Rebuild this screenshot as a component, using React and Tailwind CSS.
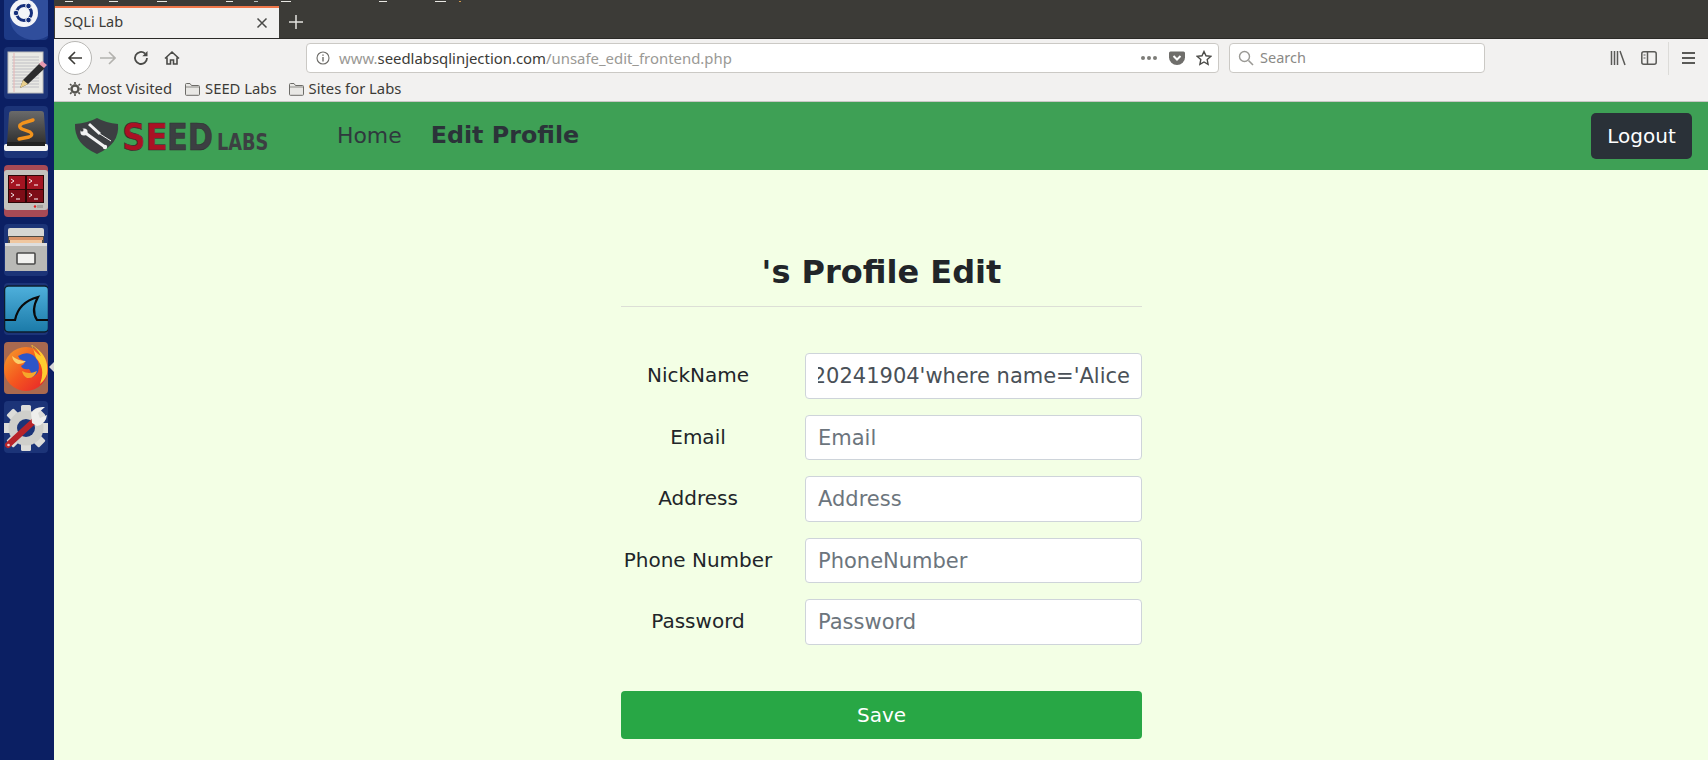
import React from "react";
const ui = { fontFamily: '"Noto Sans", "Open Sans", sans-serif' };
const dv = { fontFamily: '"DejaVu Sans", sans-serif' };

function Tile({ bg = "bg-[#1c3478]", children }) {
  return <div className={`w-[44px] h-[52px] rounded-[4px] ${bg} flex items-center justify-center overflow-hidden shrink-0`}>{children}</div>;
}
const Ubuntu = () => (
  <svg width="44" height="52" viewBox="0 0 44 52">
    <ellipse cx="30" cy="30" rx="24" ry="22" fill="#3d5cab" opacity=".6" />
    <circle cx="20" cy="25" r="14" fill="#f4f5f8" />
    <circle cx="20" cy="25" r="7.5" fill="none" stroke="#17307c" strokeWidth="3" />
    <circle cx="12" cy="25" r="2.8" fill="#17307c" stroke="#f4f5f8" /><circle cx="24.500" cy="18" r="2.800" fill="#17307c" stroke="#f4f5f8" /><circle cx="24.500" cy="32" r="2.800" fill="#17307c" stroke="#f4f5f8" />
  </svg>
);
const Notes = () => (
  <svg width="44" height="52" viewBox="0 0 44 52">
    <rect x="4" y="5" width="35" height="41" fill="#e9e9e4" stroke="#bbb" />
    {[10,13,16,19,22,25,28,31,34,37,40].map(y => <line key={y} x1="8" x2="35" y1={y} y2={y} stroke="#b4b4bb" strokeWidth=".8" />)}
    <line x1="10" x2="10" y1="6" y2="45" stroke="#e7b4b4" />
    <path d="M16 41 L19 33 L36 16 L41 21 L24 37 Z" fill="#2d2d2d" />
    <path d="M35 17 L38 14 L43 18 L40 21 Z" fill="#e79ab0" />
    <path d="M16 41 L19 33 L24 37 Z" fill="#e8cf8d" />
  </svg>
);
const Sublime = () => (
  <svg width="44" height="52" viewBox="0 0 44 52">
    <defs><linearGradient id="sb" x1="0" y1="0" x2="0" y2="1"><stop offset="0" stopColor="#6a6a6a" /><stop offset="1" stopColor="#2f2f2f" /></linearGradient></defs>
    <path d="M5 8 Q5 5 8 5 L37 5 Q40 5 40 8 L42 38 L3 38 Z" fill="url(#sb)" />
    <rect x="0" y="38" width="44" height="7" rx="2" fill="#f2f2f2" />
    <rect x="3" y="36" width="38" height="4" fill="#222" />
    <path d="M29 14 L19 17 Q13 20 18 23 L26 26 Q30 29 25 31 L15 33" fill="none" stroke="#f2931c" strokeWidth="3.4" strokeLinecap="round" />
  </svg>
);
const Term = () => (
  <svg width="44" height="52" viewBox="0 0 44 52">
    <rect x="0" y="5" width="44" height="40" rx="3" fill="#c4c2bd" />
    <rect x="4" y="10" width="36" height="28" fill="#2c0707" />
    <rect x="5" y="11" width="16" height="13" fill="#a31421" /><rect x="23" y="11" width="16" height="13" fill="#a31421" />
    <rect x="5" y="25" width="16" height="12" fill="#7d0d17" /><rect x="23" y="25" width="16" height="12" fill="#7d0d17" />
    <path d="M7 14l3 2-3 2M25 14l3 2-3 2M7 28l3 2-3 2M25 28l3 2-3 2" stroke="#fff" strokeWidth=".9" fill="none" />
    <path d="M12 20h4M30 20h4M12 34h4M30 34h4" stroke="#fff" strokeWidth="1" />
    <circle cx="31" cy="41.500" r="1.200" fill="#e21e1e" />
    <rect x="33" y="40" width="6" height="3" fill="#a5a39e" />
  </svg>
);
const Files = () => (
  <svg width="44" height="52" viewBox="0 0 44 52">
    <path d="M4 6 Q4 4 6 4 L38 4 Q40 4 40 6 L40 12 L4 12 Z" fill="#d6d6d3" />
    <rect x="4" y="12" width="36" height="7" fill="#4d4a45" />
    <rect x="5" y="13" width="34" height="3" fill="#d9946a" />
    <rect x="6" y="16" width="32" height="3" fill="#f0c7a0" />
    <path d="M1 19 L43 19 L43 47 L1 47 Z" fill="#b9b9b6" />
    <rect x="1" y="19" width="42" height="3" fill="#dedede" />
    <rect x="13" y="29" width="18" height="11" rx="1" fill="#f1f1ef" stroke="#4a4a4a" strokeWidth="1.600" />
  </svg>
);
const Shark = () => (
  <svg width="44" height="52" viewBox="0 0 44 52">
    <defs><linearGradient id="sk" x1="0" y1="0" x2="0" y2="1"><stop offset="0" stopColor="#4fb0dc" /><stop offset="1" stopColor="#1b7aa8" /></linearGradient></defs>
    <rect x="0.500" y="3" width="44" height="46" rx="4" fill="url(#sk)" stroke="#0c1d2c" strokeWidth="1.500" />
    <path d="M1 37 H11 C13 27 19 18 34 14 C29 23 29 31 33 37 H44" fill="none" stroke="#0a0a0a" strokeWidth="2.200" />
  </svg>
);
const Fox = () => (
  <svg width="44" height="52" viewBox="0 0 44 52">
    <defs><linearGradient id="fx" x1="0" y1="0" x2="1" y2="1"><stop offset="0" stopColor="#f5a02a" /><stop offset=".5" stopColor="#f4571f" /><stop offset="1" stopColor="#e6202c" /></linearGradient></defs>
    <circle cx="22" cy="27" r="22" fill="url(#fx)" />
    <path d="M27 3 Q30 10 37 14 Q33 6 27 3Z M28 3 Q46 14 43 32 Q41 38 36 42 Q42 26 32 16 Q30 9 28 3Z" fill="#ffcb2f" />
    <path d="M14 14 Q24 8 31 15 Q37 22 34 30 Q30 37 22 35 Q30 33 25 27 Q19 28 17 24 Q24 20 18 18 Q15 17 14 14Z" fill="#2b55c8" />
    <path d="M18 29 Q25 33 33 29 Q30 37 23 36 Q19 34 18 29Z" fill="#f6a72a" />
    <path d="M8 14 Q14 19 22 19 Q19 22 14 22 Q9 20 8 14Z" fill="#fbd06a" />
  </svg>
);
const Tools = () => (
  <svg width="44" height="52" viewBox="0 0 44 52">
    <g transform="translate(22 27)">
      {[0,45,90,135].map(a => <rect key={a} x="-5" y="-23" width="10" height="46" rx="1.500" fill="#dcdcd9" transform={`rotate(${a})`} />)}
      <circle r="17.500" fill="#cfcfcb" /><circle r="9" fill="#1c3478" />
    </g>
    <path d="M4 44 L30 20" stroke="#b8242a" strokeWidth="6" strokeLinecap="round" />
    <path d="M28 22 L27 12 Q31 5 41 6 L34 12 L36 17 L43 14 Q42 23 33 25 Z" fill="#eeeeec" />
    <circle cx="4.500" cy="44" r="1.300" fill="#f4d5d5" />
  </svg>
);

const SvgI = ({ w = 16, h = 16, children, className = "" }) => (
  <svg width={w} height={h} viewBox={`0 0 ${w} ${h}`} fill="none" className={`shrink-0 ${className}`}>{children}</svg>
);
const Folder = () => (
  <SvgI w={15} h={14}><path d="M.5 12.500V2.500q0-1 1-1h3.500l1.500 2h7q1 0 1 1v8q0 .8-1 .8h-12q-1 0-1-.8Z" fill="#e9e8e5" stroke="#6d6c68" /><path d="M1 5h13" stroke="#8b8a86" /></SvgI>
);

function Row({ label, placeholder, value, mb = "mb-[16px]" }) {
  return (
    <div className={`flex items-center ${mb}`}>
      <label className="w-[154px] mr-[30px] shrink-0 text-center text-[20px] text-[#212529] -mt-[1px]" style={dv}>{label}</label>
      <div className="w-[337px] h-[45.5px] bg-white border border-[#ced4da] rounded-[4px] overflow-hidden flex items-center pl-[12px] pr-[11px] pt-[2px]">
        {value ? (
          <div className="w-full overflow-hidden whitespace-nowrap flex justify-end text-[21px] text-[#495057]" style={dv}><span className="shrink-0">{value}</span></div>
        ) : (
          <span className="text-[21px] text-[#6c757d]" style={dv}>{placeholder}</span>
        )}
      </div>
    </div>
  );
}

export default function App() {
  return (
    <div className="w-[1708px] h-[760px] flex overflow-hidden bg-[#f3ffe5]" style={ui}>
      <aside className="w-[54px] shrink-0 h-[772px] bg-[#0b1f63] pl-[4px] pr-[6px] flex flex-col gap-[7px] -mt-[12px] relative">
        <Tile bg="bg-[#1d3a86]"><Ubuntu /></Tile>
        <Tile><Notes /></Tile>
        <Tile><Sublime /></Tile>
        <Tile bg="bg-[#a84a55]"><Term /></Tile>
        <Tile><Files /></Tile>
        <Tile><Shark /></Tile>
        <Tile bg="bg-[#a8694f]"><Fox /></Tile>
        <Tile><Tools /></Tile>
        <div className="absolute left-[49px] top-[374px] w-0 h-0 border-y-[5px] border-y-transparent border-r-[5px] border-r-[#d8d8d8]" />
      </aside>
      <main className="flex-1 flex flex-col min-w-0">
        <div className="h-[38px] bg-[#3c3b37] flex items-end relative shrink-0">
          <div className="absolute left-0 top-[1px] flex h-[1px]">
            <span className="ml-[11px] w-[8px] bg-[#e8e7e3]" /><span className="ml-[36px] w-[9px] bg-[#e8e7e3]" /><span className="ml-[39px] w-[10px] bg-[#e8e7e3]" /><span className="ml-[59px] w-[7px] bg-[#e8e7e3]" />
            <span className="ml-[21px] w-[4px] bg-[#b8c0c0]" /><span className="ml-[23px] w-[10px] bg-[#e8e7e3]" /><span className="ml-[88px] w-[8px] bg-[#e8e7e3]" /><span className="ml-[48px] w-[11px] bg-[#e8e7e3]" /><span className="ml-[13px] w-[2px] bg-[#d59a4a]" />
          </div>
          <div className="ml-[1px] w-[224px] h-[32px] bg-[#f2f1f0] border-t-2 border-[#f0774a] flex items-center pl-[9px] pr-[11px] text-[14.5px] text-[#3c3b37]">
            <span className="flex-1 -mt-[3px]">SQLi Lab</span>
            <SvgI w={12} h={12}><path d="M1.500 1.500l9 9m0-9l-9 9" stroke="#4a4a48" strokeWidth="1.500" /></SvgI>
          </div>
          <div className="ml-[10px] mb-[9px]">
            <SvgI w={14} h={14}><path d="M7 0v14M0 7h14" stroke="#e4e3e0" strokeWidth="1.500" /></SvgI>
          </div>
        </div>
        <div className="h-[39px] bg-[#f2f1f0] flex items-center shrink-0 pl-[4px] border-t border-[#2b2a27]">
          <div className="w-[34px] h-[34px] rounded-full bg-white border border-[#b8b7b4] flex items-center justify-center">
            <SvgI><path d="M15 8H2M8 2L2 8l6 6" stroke="#3c3b37" strokeWidth="1.600" /></SvgI>
          </div>
          <div className="ml-[8px]"><SvgI><path d="M0 8h15M9 2l6 6-6 6" stroke="#b3b2ae" strokeWidth="1.600" /></SvgI></div>
          <div className="ml-[17px]"><SvgI><path d="M14 8a6 6 0 1 1-2-4.500" stroke="#4a4a47" strokeWidth="1.800" /><path d="M14.500 1v5.200H9.300Z" fill="#4a4a47" /></SvgI></div>
          <div className="ml-[15px]"><SvgI><path d="M1 8.500L8 2l7 6.500M3 7.500V14h3.500v-4h3v4H13V7.500" stroke="#4a4a47" strokeWidth="1.600" /></SvgI></div>
          <div className="ml-[126px] w-[913px] h-[30px] bg-white border border-[#cbc9c5] rounded-[4px] flex items-center pl-[9px] pr-[6px] text-[14.9px]">
            <SvgI w={14} h={14}><circle cx="7" cy="7" r="6" stroke="#6d6c68" strokeWidth="1.100" /><path d="M7 6v4.500M7 3.400v1.400" stroke="#6d6c68" strokeWidth="1.400" /></SvgI>
            <span className="ml-[9px] flex-1"><span className="text-[#9a9995]">www.</span><span className="text-[#3c3b37]">seedlabsqlinjection.com</span><span className="text-[#9a9995]">/unsafe_edit_frontend.php</span></span>
            <div className="flex gap-[2px] mr-[12px]"><i className="w-[4px] h-[4px] rounded-full bg-[#7d7c78]" /><i className="w-[4px] h-[4px] rounded-full bg-[#7d7c78]" /><i className="w-[4px] h-[4px] rounded-full bg-[#7d7c78]" /></div>
            <SvgI><path d="M0 3q0-1.500 1.500-1.500h13Q16 1.500 16 3v4.500a8 7.500 0 0 1-16 0Z" fill="#6f6e6b" /><path d="M4.500 6L8 9.500 11.500 6" stroke="#fff" strokeWidth="2" /></SvgI>
            <div className="ml-[11px]"><SvgI><path d="M8 1.500l2 4.300 4.700.6-3.500 3.200.9 4.700L8 12l-4.100 2.300.9-4.700L1.300 6.400 6 5.800Z" stroke="#4a4a47" strokeWidth="1.400" /></SvgI></div>
          </div>
          <div className="ml-[10px] w-[256px] h-[30px] bg-white border border-[#cbc9c5] rounded-[4px] flex items-center pl-[8px] text-[14.5px] text-[#8a8986]">
            <SvgI><circle cx="6.500" cy="6.500" r="5" stroke="#9a9995" strokeWidth="1.400" /><path d="M10.500 10.500L15 15" stroke="#9a9995" strokeWidth="1.600" /></SvgI>
            <span className="ml-[6px]">Search</span>
          </div>
          <div className="ml-[125px]"><SvgI><path d="M1.500 1v14M4.500 1v14M7.500 1v14M10 1l5 14" stroke="#5a5a57" strokeWidth="1.500" /></SvgI></div>
          <div className="ml-[15px]"><SvgI><rect x=".8" y="1.800" width="14.400" height="12.400" rx="2" stroke="#5a5a57" strokeWidth="1.500" /><path d="M6.500 2v12" stroke="#5a5a57" strokeWidth="1.500" /><path d="M2.500 5h2M2.500 8h2" stroke="#5a5a57" /></SvgI></div>
          <div className="ml-[11px] w-px h-[33px] bg-[#dcdbd8]" />
          <div className="ml-[13px]"><SvgI w={13} h={14}><path d="M0 2h13M0 7h13M0 12h13" stroke="#5a5a57" strokeWidth="1.800" /></SvgI></div>
        </div>
        <div className="h-[25px] bg-[#f2f1f0] flex items-center pl-[14px] text-[14.8px] text-[#3c3b37] border-b border-[#c8c7c4] shrink-0">
          <SvgI w={14} h={14}><circle cx="7" cy="7" r="3.500" stroke="#55544f" strokeWidth="2.400" /><path d="M7 0v14M0 7h14M2 2l10 10M12 2L2 12" stroke="#55544f" strokeWidth="1.600" strokeDasharray="2.200 9.600" /></SvgI>
          <span className="ml-[5px] -mt-[2px]">Most Visited</span>
          <div className="ml-[13px]"><Folder /></div>
          <span className="ml-[5px] -mt-[2px]">SEED Labs</span>
          <div className="ml-[12px]"><Folder /></div>
          <span className="ml-[5px] -mt-[2px]">Sites for Labs</span>
        </div>
        <nav className="h-[68px] bg-[#3ea055] flex items-center shrink-0 pl-[20px]" style={dv}>
          <svg width="196" height="40" viewBox="0 0 196 40" className="shrink-0">
            <path d="M1 8 Q14 7 23 2 Q32 7 44 8 Q46 28 23 38 Q0 28 1 8Z" fill="#3c3f42" />
            <path d="M26 18l11 7" stroke="#f2f2f2" strokeWidth="1" />
            <path d="M15 8l11 10" stroke="#f2f2f2" strokeWidth="3" />
            <path d="M10 16l21 15" stroke="#f2f2f2" strokeWidth="3" />
            <circle cx="10" cy="16" r="3.600" fill="#f2f2f2" /><circle cx="31" cy="31" r="2.200" fill="#f2f2f2" />
            <circle cx="8" cy="14" r="1.500" fill="#3c3f42" />
            <g style={{ fontFamily: '"DejaVu Sans", sans-serif', fontWeight: 700 }}>
              <text transform="translate(48 34) scale(1.25 1.46)" fontSize="26" fill="#ab1124" stroke="#2f2f30" strokeWidth=".4">SE</text>
              <text transform="translate(93 34) scale(1.17 1.46)" fontSize="26" fill="#3c3f42" stroke="#2f2f30" strokeWidth=".4">ED</text>
              <text transform="translate(143 34) scale(1.11 1.44)" fontSize="16" fill="#3c3f42">LABS</text>
            </g>
          </svg>
          <span className="ml-[67px] text-[21.900px] text-[#2f383d]">Home</span>
          <span className="ml-[29px] text-[23.800px] font-bold text-[#2b3339] -mt-[1px]">Edit Profile</span>
          <button className="ml-auto mr-[16px] w-[101px] h-[46px] bg-[#2a3138] rounded-[5px] text-white text-[20px]" style={dv}>Logout</button>
        </nav>
        <section className="flex-1 pl-[567px] pt-[83px] text-[#212529]" style={dv}>
          <div className="w-[521px]">
            <h1 className="text-center text-[32px] leading-[38px] font-bold text-[#212529] pb-[15px] border-b border-[#dcdfd6]">'s Profile Edit</h1>
            <div className="mt-[46px]">
              <Row label="NickName" value="20241904'where name='Alice" />
              <Row label="Email" placeholder="Email" />
              <Row label="Address" placeholder="Address" />
              <Row label="Phone Number" placeholder="PhoneNumber" />
              <Row label="Password" placeholder="Password" mb="mb-[46px]" />
            </div>
            <button className="w-full h-[48px] bg-[#28a745] rounded-[4px] text-white text-[20px]" style={dv}>Save</button>
          </div>
        </section>
      </main>
    </div>
  );
}
